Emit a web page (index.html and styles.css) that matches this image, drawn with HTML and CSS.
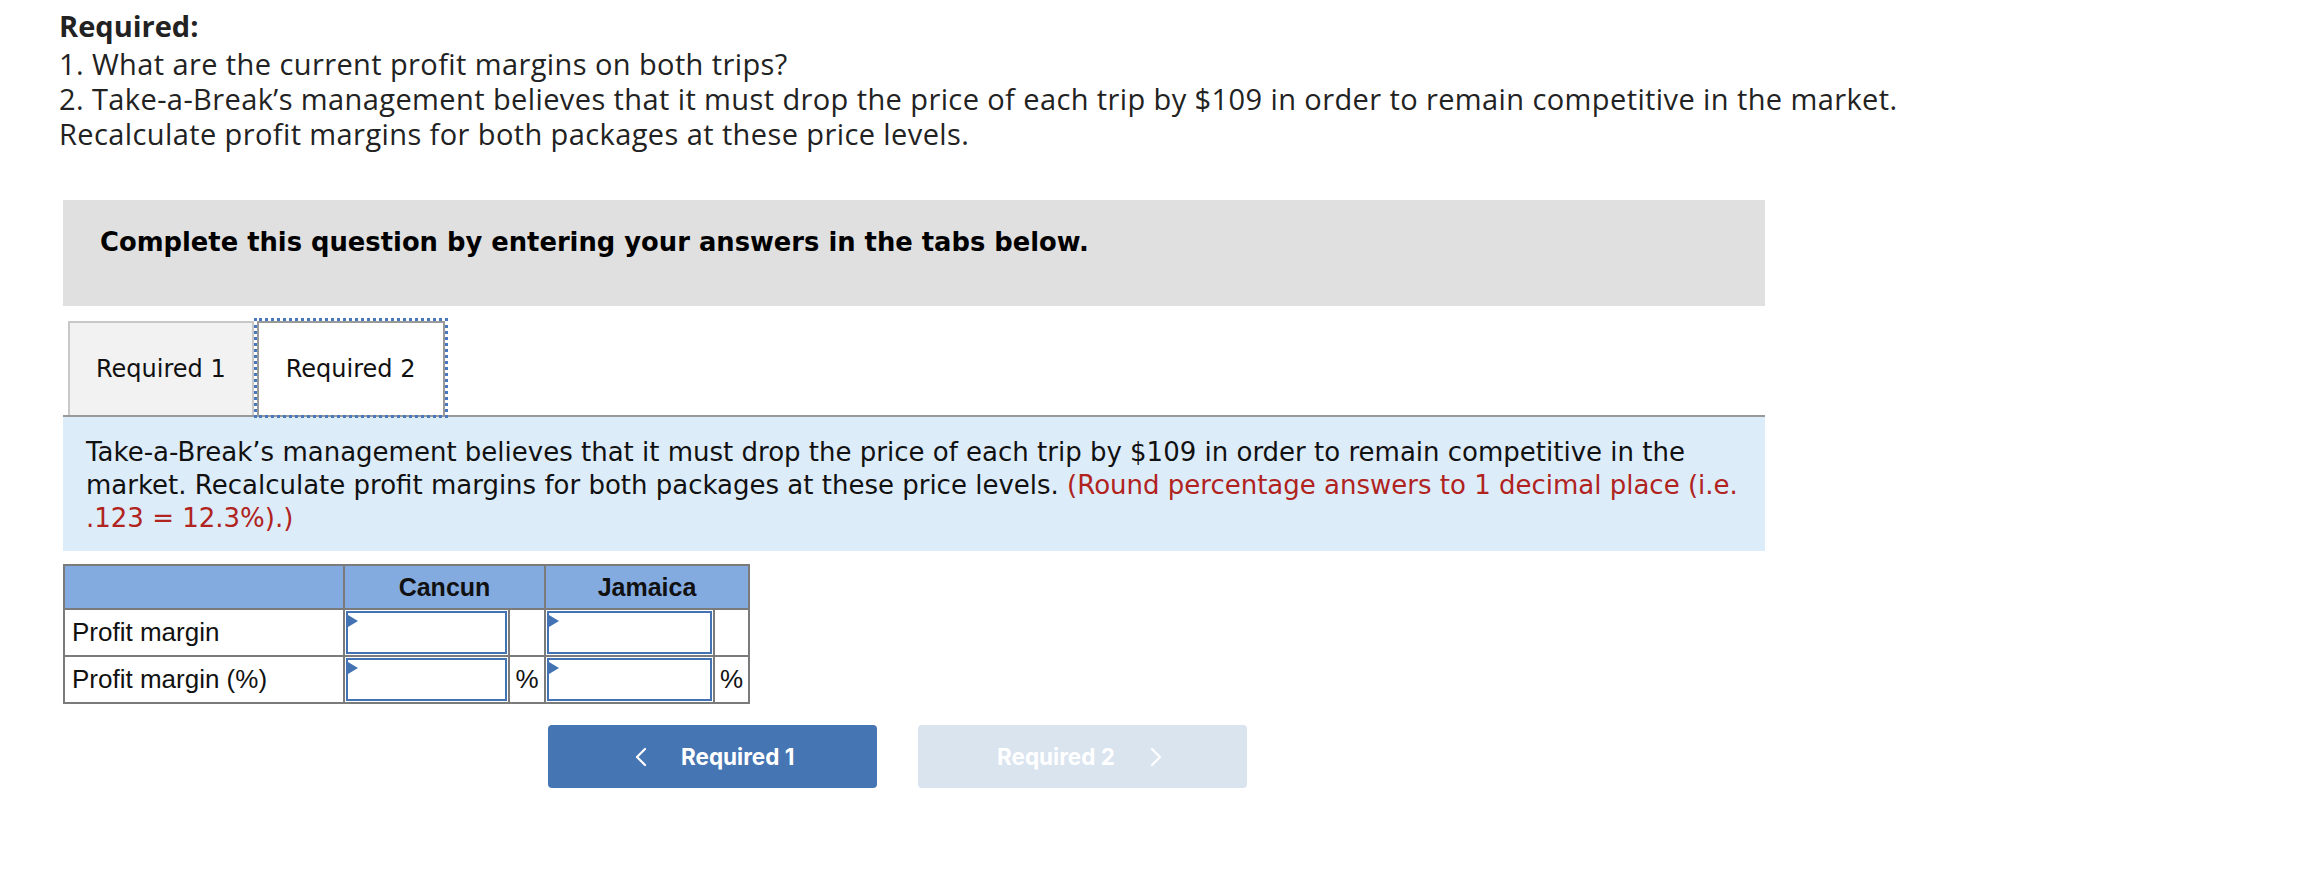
FILE: index.html
```html
<!DOCTYPE html>
<html>
<head>
<meta charset="utf-8">
<link rel="stylesheet" href="styles.css">
</head>
<body>
<div class="page">
  <div class="req">
    <div class="req-title">Required:</div>
    <div class="req-line">1. What are the current profit margins on both trips?</div>
    <div class="req-line">2. Take-a-Break’s management believes that it must drop the price of each trip by $109 in order to remain competitive in the market.</div>
    <div class="req-line">Recalculate profit margins for both packages at these price levels.</div>
  </div>

  <div class="instr">Complete this question by entering your answers in the tabs below.</div>

  <div class="tabs">
    <div class="tab tab-inactive">Required 1</div>
    <div class="tab tab-active">Required 2</div>
  </div>

  <div class="prompt">Take-a-Break’s management believes that it must drop the price of each trip by $109 in order to remain competitive in the market. Recalculate profit margins for both packages at these price levels. <span class="hint">(Round percentage answers to 1 decimal place (i.e. .123 = 12.3%).)</span></div>

  <table class="grid">
    <tr class="head">
      <th class="c-label"></th>
      <th colspan="2">Cancun</th>
      <th colspan="2">Jamaica</th>
    </tr>
    <tr>
      <td class="c-label">Profit margin</td>
      <td class="c-in"><div class="inbox"></div></td>
      <td class="c-unit"></td>
      <td class="c-in2"><div class="inbox"></div></td>
      <td class="c-unit2"></td>
    </tr>
    <tr>
      <td class="c-label">Profit margin (%)</td>
      <td class="c-in"><div class="inbox"></div></td>
      <td class="c-unit">%</td>
      <td class="c-in2"><div class="inbox"></div></td>
      <td class="c-unit2">%</td>
    </tr>
  </table>

  <div class="nav">
    <div class="btn btn-prev">
      <svg class="chev" width="12" height="20" viewBox="0 0 12 20"><polyline points="10,2 2,10 10,18" fill="none" stroke="#fff" stroke-width="2.2" stroke-linecap="round" stroke-linejoin="round"/></svg>
      <span>Required 1</span>
    </div>
    <div class="btn btn-next">
      <span>Required 2</span>
      <svg class="chev" width="12" height="20" viewBox="0 0 12 20"><polyline points="2,2 10,10 2,18" fill="none" stroke="#fff" stroke-width="2.2" stroke-linecap="round" stroke-linejoin="round"/></svg>
    </div>
  </div>
</div>
</body>
</html>
```

FILE: styles.css
```css
html, body {
  margin: 0;
  padding: 0;
  background: #fff;
}
.page {
  padding: 8px 0 0 63px;
  width: 1702px;
}
.req {
  margin-left: -4px;
  font-family: "Open Sans", "Liberation Sans", sans-serif;
  font-size: 29px;
  letter-spacing: 0.4px;
  color: #222;
  line-height: 35px;
  white-space: nowrap;
}
.req-title {
  font-weight: 700;
  letter-spacing: 0;
  margin-bottom: 3px;
}
.instr {
  margin-top: 49px;
  height: 106px;
  box-sizing: border-box;
  background: #e0e0e0;
  padding: 27px 37px 0;
  line-height: 30px;
  font-family: "DejaVu Sans", Verdana, sans-serif;
  font-weight: 700;
  font-size: 25.8px;
  color: #000;
}
.tabs {
  display: flex;
  align-items: flex-end;
  margin-top: 15px;
  padding-left: 5px;
  border-bottom: 2px solid #999;
  height: 94px;
}
.tab {
  box-sizing: border-box;
  height: 94px;
  display: flex;
  align-items: center;
  padding: 0 26px;
  font-family: "DejaVu Sans", Verdana, sans-serif;
  font-size: 24px;
  color: #111;
}
.tab-inactive {
  background: #f2f2f2;
  border: 2px solid #c8c8c8;
  border-bottom: none;
}
.tab-active {
  background: #fff;
  border: 2px solid #999;
  border-bottom: none;
  outline: 3px dotted #4a78bd;
  outline-offset: 0px;
  position: relative;
  margin-left: 3px;
  padding: 0 28px 0 27px;
}
.prompt {
  background: #ddecf9;
  padding: 19px 14px 16px 23px;
  font-family: "DejaVu Sans", Verdana, sans-serif;
  font-size: 26px;
  line-height: 33px;
  color: #111;
}
.hint {
  color: #b0231e;
}
.grid {
  margin-top: 13px;
  border-collapse: collapse;
  font-family: "Liberation Sans", Arial, sans-serif;
  font-size: 26px;
  color: #111;
}
.grid th, .grid td {
  border: 2px solid #7b7b7b;
  padding: 0;
}
.grid .head th {
  background: #84abe0;
  height: 42px;
  font-weight: 700;
  text-align: center;
  font-size: 25px;
}
.grid td {
  height: 45px;
}
.c-label {
  width: 271px;
  padding-left: 7px !important;
  text-align: left;
}
.c-in { width: 163px; }
.c-in2 { width: 167px; }
.c-unit {
  width: 34px;
  text-align: center;
}
.c-unit2 {
  width: 33px;
  text-align: center;
}
.inbox {
  position: relative;
  box-sizing: border-box;
  height: 43px;
  margin: 1px;
  border: 2px solid #4473b3;
  background: #fff;
}
.inbox::before {
  content: "";
  position: absolute;
  left: 0;
  top: 2px;
  border-top: 6px solid transparent;
  border-bottom: 6px solid transparent;
  border-left: 10px solid #4473b3;
}
.nav {
  display: flex;
  gap: 41px;
  margin-top: 21px;
  margin-left: 485px;
}
.btn {
  width: 329px;
  height: 63px;
  box-sizing: border-box;
  border-radius: 4px;
  display: flex;
  align-items: center;
  font-family: "Inter", "Roboto", sans-serif;
  font-weight: 700;
  font-size: 22.5px;
  color: #fff;
}
.btn-prev {
  background: #4675b3;
  padding-left: 87px;
  gap: 34px;
}
.btn-next {
  background: #dae4ef;
  padding-left: 79px;
  gap: 35px;
}
.chev {
  display: block;
}
```
